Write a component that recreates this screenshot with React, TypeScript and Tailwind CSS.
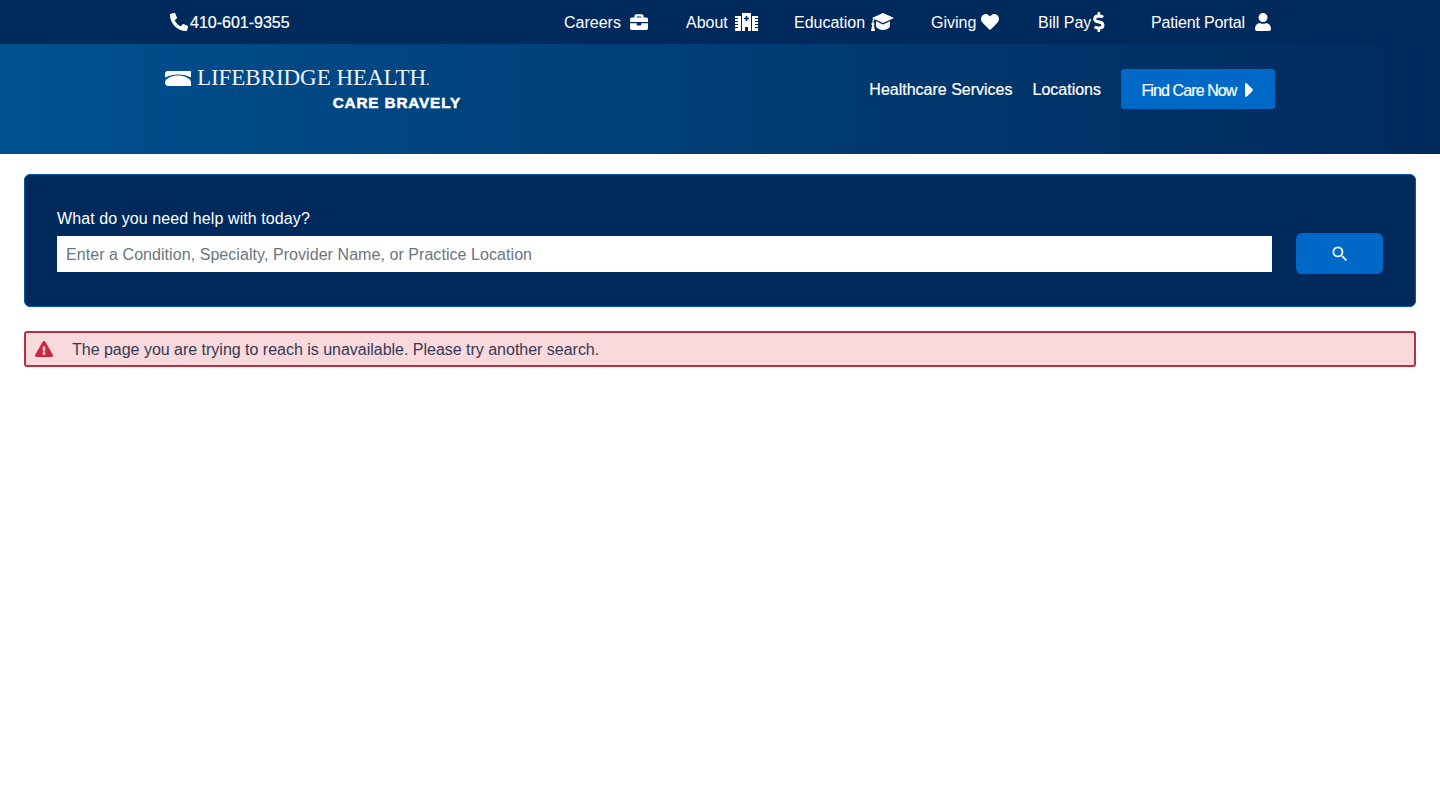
import React from 'react';
import { FaPhoneAlt, FaBriefcase, FaHeart, FaDollarSign, FaUser, FaExclamationTriangle } from 'react-icons/fa';
import { MdSearch } from 'react-icons/md';

const HospitalIcon = () => (
  <svg width="23" height="18" viewBox="0 0 23 18" fill="currentColor">
    <path fillRule="evenodd" d="M7 0h9v18h-3v-4h-3v4H7V0zm3.7 3v1.7H9v1.6h1.7V8h1.6V6.3H14V4.7h-1.7V3h-1.6z" />
    <path d="M0 3h6v15H0v-3h3v-1H0v-2h3v-1H0v-2h3V8H0V6h3V5H0V3zM17 3h6v2h-3v1h3v2h-3v1h3v2h-3v1h3v2h-3v1h3v3h-6V3z" />
  </svg>
);

const CapIcon = () => (
  <svg width="23" height="18" viewBox="0 0 23 18" fill="currentColor">
    <path d="M12 0 23 5 12 10 3.5 6.2C2.8 7 2.5 8 2.5 9.5c.6.3 1 .9 1 1.5 0 .5-.2 1-.6 1.3L4 18H0l1.1-5.7C.7 12 .4 11.5.4 11c0-.7.4-1.2 1-1.5 0-1.6.3-3 1-4L1 5 12 0Z" />
    <path d="M5 8.3 12 11.4l7-3.1v5c-1 2.5-4 3.7-7 3.7s-5.5-1-7-3.4Z" />
  </svg>
);

const TOP_LINKS = [
  { label: 'Careers', icon: <FaBriefcase size={18} />, gap: 'gap-[9px]', width: 'w-[86px]' },
  { label: 'About', icon: <HospitalIcon />, gap: 'gap-[7px]', width: 'w-[72px]' },
  { label: 'Education', icon: <CapIcon />, gap: 'gap-[6px]', width: 'w-[101px]' },
  { label: 'Giving', icon: <FaHeart size={18} />, gap: 'gap-[5px]', width: 'w-[71px]' },
  { label: 'Bill Pay', icon: <FaDollarSign size={20} />, gap: 'gap-[2px]', width: 'w-[67px]' },
];

export default function App() {
  return (
    <div className="min-h-[810px] bg-white font-['Liberation_Sans',Arial,sans-serif] text-white">
      <div className="h-[44px] bg-[#002a5c]">
        <div className="mx-auto flex h-full w-[1110px] items-center pl-[5px] text-base">
          <a className="flex items-center gap-[2px] font-medium [-webkit-text-stroke:0.2px_white]">
            <FaPhoneAlt size={18} />
            <span className="pt-[1px]">410-601-9355</span>
          </a>
          <nav className="ml-auto mr-[3px] flex items-center gap-[36px]">
            {TOP_LINKS.map((link) => (
              <a key={link.label} className={`flex items-center whitespace-nowrap ${link.gap} ${link.width}`}>
                <span className="pt-[1px]">{link.label}</span>
                {link.icon}
              </a>
            ))}
            <a className="ml-[10px] flex w-[121px] items-center justify-between whitespace-nowrap">
              <span className="pt-[1px] tracking-[-0.15px]">Patient Portal</span>
              <FaUser size={18} />
            </a>
          </nav>
        </div>
      </div>

      <header className="h-[110px] bg-[linear-gradient(90deg,#00508f,#002a5c)]">
        <div className="mx-auto flex w-[1110px] items-start justify-between">
          <div className="flex w-[296px] flex-col pt-[21px]">
            <div className="flex items-center gap-[6px]">
              <svg width="26" height="16" viewBox="0 0 26 16" fill="currentColor">
                <path d="M3 0 H26 V6.5 C19 2.5 8 2.5 0 6.5 V3 C0 1.2 1.2 0 3 0Z" />
                <path d="M0 11 C1 7 7 4.5 13 4.5 C19 4.5 25 7 26 11 V15 H3 C1.2 15 0 13.5 0 12Z" />
              </svg>
              <span className="whitespace-nowrap font-['Liberation_Serif',serif] text-[23.1px] leading-6 tracking-[-0.1px] text-[#eef3f9]">
                LIFEBRIDGE HEALTH<span className="text-[14px]">.</span>
              </span>
            </div>
            <div className="mt-[2px] self-end whitespace-nowrap text-[15.3px] leading-4 font-bold tracking-[0.85px] [-webkit-text-stroke:0.5px_white]">
              CARE BRAVELY
            </div>
          </div>
          <nav className="flex items-center gap-[20px] pt-[25px]">
            <a className="pt-[2px] [-webkit-text-stroke:0.2px_white]">Healthcare Services</a>
            <a className="pt-[2px] [-webkit-text-stroke:0.2px_white]">Locations</a>
            <button className="flex h-[40px] w-[154px] items-center justify-center gap-[8px] rounded-[3px] bg-[#0069c7] pr-[2px] tracking-[-0.9px] [-webkit-text-stroke:0.2px_white]">
              <span className="pt-[3px]">Find Care Now</span>
              <svg width="8" height="14" viewBox="0 0 8 14" fill="currentColor" className="mt-[1px]">
                <path d="M0 1.2C0 .2 1 -.3 1.8 .4L7.5 6.1c.5.5.5 1.3 0 1.8L1.8 13.6C1 14.3 0 13.8 0 12.8V1.2Z" />
              </svg>
            </button>
          </nav>
        </div>
      </header>

      <main className="flex flex-col gap-[24px] px-[24px] pt-[20px]">
        <section className="flex h-[133px] items-end gap-[24px] rounded-[6px] border border-[#005a9c] bg-[#002a5c] px-[32px] pb-[32px]">
          <div className="mb-[2px] flex-1">
            <label className="mb-[7px] block leading-[20px] tracking-[0.09px]">What do you need help with today?</label>
            <input
              className="block h-[36px] w-full bg-white px-[9px] pt-[2px] text-base tracking-[0.06px] text-[#333] outline-none placeholder:text-[#6c757d]"
              placeholder="Enter a Condition, Specialty, Provider Name, or Practice Location"
            />
          </div>
          <button className="flex h-[41px] w-[87px] items-center justify-center rounded-[6px] bg-[#0069c7]">
            <MdSearch size={20} />
          </button>
        </section>

        <div className="flex h-[36px] items-center gap-[19px] rounded-[3px] border-2 border-[#bb3040] bg-[#f9d9dc] pl-[9px] text-[#343a55]">
          <FaExclamationTriangle size={18} className="text-[#c8283c]" />
          <span className="pt-[1px] tracking-[-0.015px]">The page you are trying to reach is unavailable. Please try another search.</span>
        </div>
      </main>
    </div>
  );
}
